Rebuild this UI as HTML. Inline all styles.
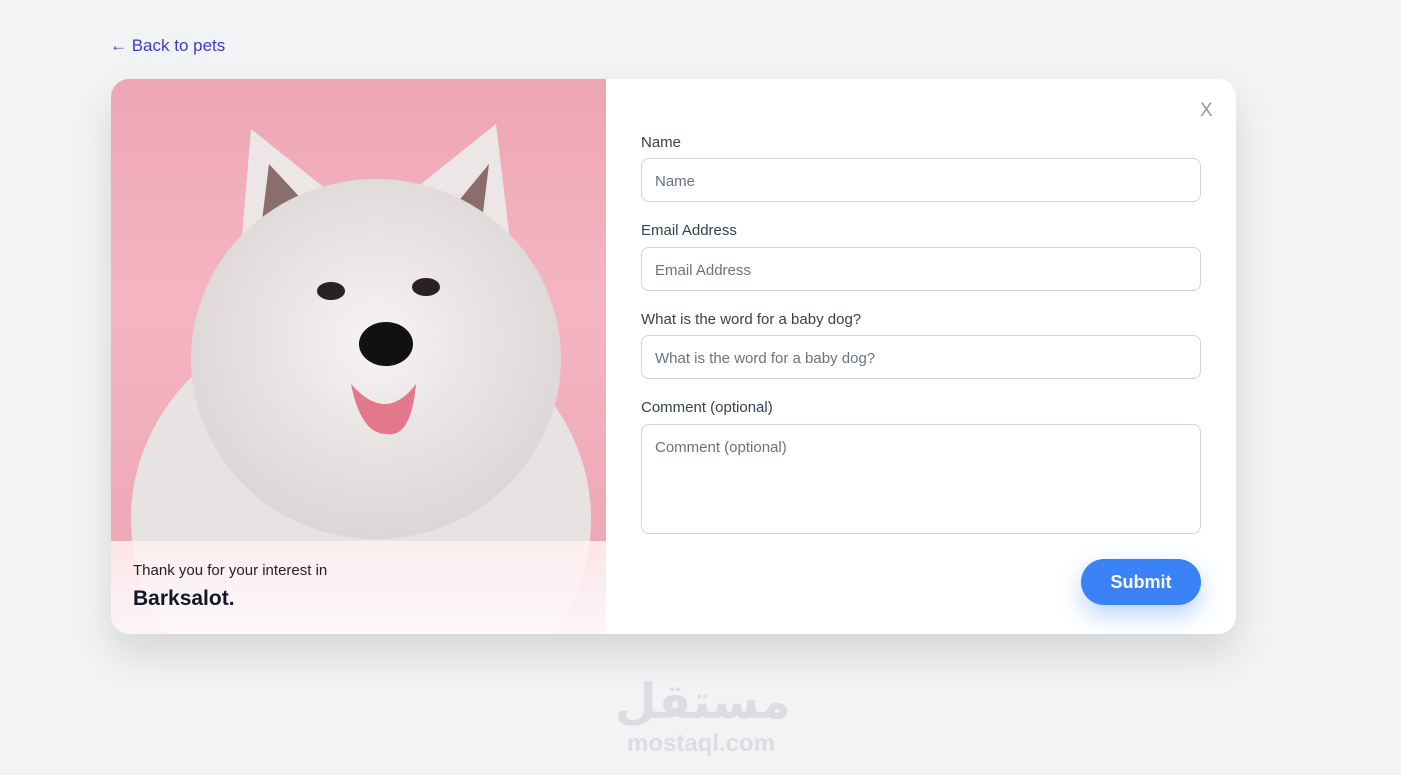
<!DOCTYPE html>
<html><head><meta charset="utf-8"><style>
*{box-sizing:border-box;margin:0;padding:0}
body{width:1401px;height:775px;background:#f2f3f5;font-family:"Liberation Sans",sans-serif;position:relative;overflow:hidden}
.back{position:absolute;left:110px;top:36px;color:#4338ca;font-size:17px}
.card{position:absolute;left:111px;top:79px;width:1125px;height:555px;background:#fff;border-radius:18px;overflow:hidden;box-shadow:0 20px 40px rgba(0,0,0,.12)}
.img{position:absolute;left:0;top:0;width:495px;height:555px;background:linear-gradient(180deg,#eda6b3 0%,#f4b5c2 40%,#eca4b2 100%);overflow:hidden}
.ov{position:absolute;left:0;top:462px;width:495px;height:93px;background:linear-gradient(180deg,rgba(255,240,242,.85),rgba(253,248,249,.97))}
.ov p{position:absolute;left:22px;top:21px;font-size:15px;color:#222}
.ov h2{position:absolute;left:22px;top:46px;font-size:21px;color:#111827;font-weight:bold}
label{position:absolute;left:530px;font-size:15px;color:#374151}
.in{position:absolute;left:530px;width:560px;height:44px;border:1px solid #d1d5db;border-radius:8px;padding:0 13px;line-height:46px;font-size:15px;color:#6b7280}
.x{position:absolute;left:1089px;top:21px;font-size:19px;color:#999}
.btn{position:absolute;left:970px;top:480px;width:120px;height:46px;border-radius:23px;background:#3b82f6;color:#fff;font-weight:bold;font-size:18px;text-align:center;line-height:46px;box-shadow:0 10px 24px rgba(59,130,246,.35)}
.wm{position:absolute;left:615px;top:676px;width:172px;text-align:center;color:#dcdde0;font-weight:bold}
</style></head><body>
<div class="back">← Back to pets</div>
<div class="card">
 <div class="img">
  <svg width="495" height="555" viewBox="0 0 495 555">
   <defs><radialGradient id="f" cx="50%" cy="45%" r="55%"><stop offset="0" stop-color="#f6f3f2"/><stop offset="1" stop-color="#dcd6d6"/></radialGradient></defs>
   <ellipse cx="250" cy="440" rx="230" ry="210" fill="#e8e3e3"/>
   <path d="M130 170 L140 50 L215 110 L310 105 L385 45 L400 170 Z" fill="#ece7e6"/>
   <path d="M150 150 L158 85 L195 125 Z" fill="#8a6e6e"/>
   <path d="M370 150 L378 85 L345 125 Z" fill="#8a6e6e"/>
   <ellipse cx="265" cy="280" rx="185" ry="180" fill="url(#f)"/>
   <ellipse cx="220" cy="212" rx="14" ry="9" fill="#2a2222"/>
   <ellipse cx="315" cy="208" rx="14" ry="9" fill="#2a2222"/>
   <ellipse cx="275" cy="265" rx="27" ry="22" fill="#111"/>
   <path d="M240 305 Q275 345 305 305 Q300 360 275 355 Q250 355 240 305Z" fill="#e3788c"/>
  </svg>
  <div class="ov"><p>Thank you for your interest in</p><h2>Barksalot.</h2></div>
 </div>
 <div class="x">X</div>
 <label style="top:55px">Name</label><div class="in" style="top:79px">Name</div>
 <label style="top:143px">Email Address</label><div class="in" style="top:168px">Email Address</div>
 <label style="top:232px">What is the word for a baby dog?</label><div class="in" style="top:256px">What is the word for a baby dog?</div>
 <label style="top:320px">Comment (optional)</label><div class="in" style="top:345px;height:110px;line-height:1;padding-top:15px">Comment (optional)</div>
 <div class="btn">Submit</div>
</div>
<div class="wm"><div style="font-size:48px;line-height:52px;font-family:'DejaVu Sans',sans-serif">مستقل</div><div style="font-size:24px;margin-top:2px">mostaql.com</div></div>
</body></html>
